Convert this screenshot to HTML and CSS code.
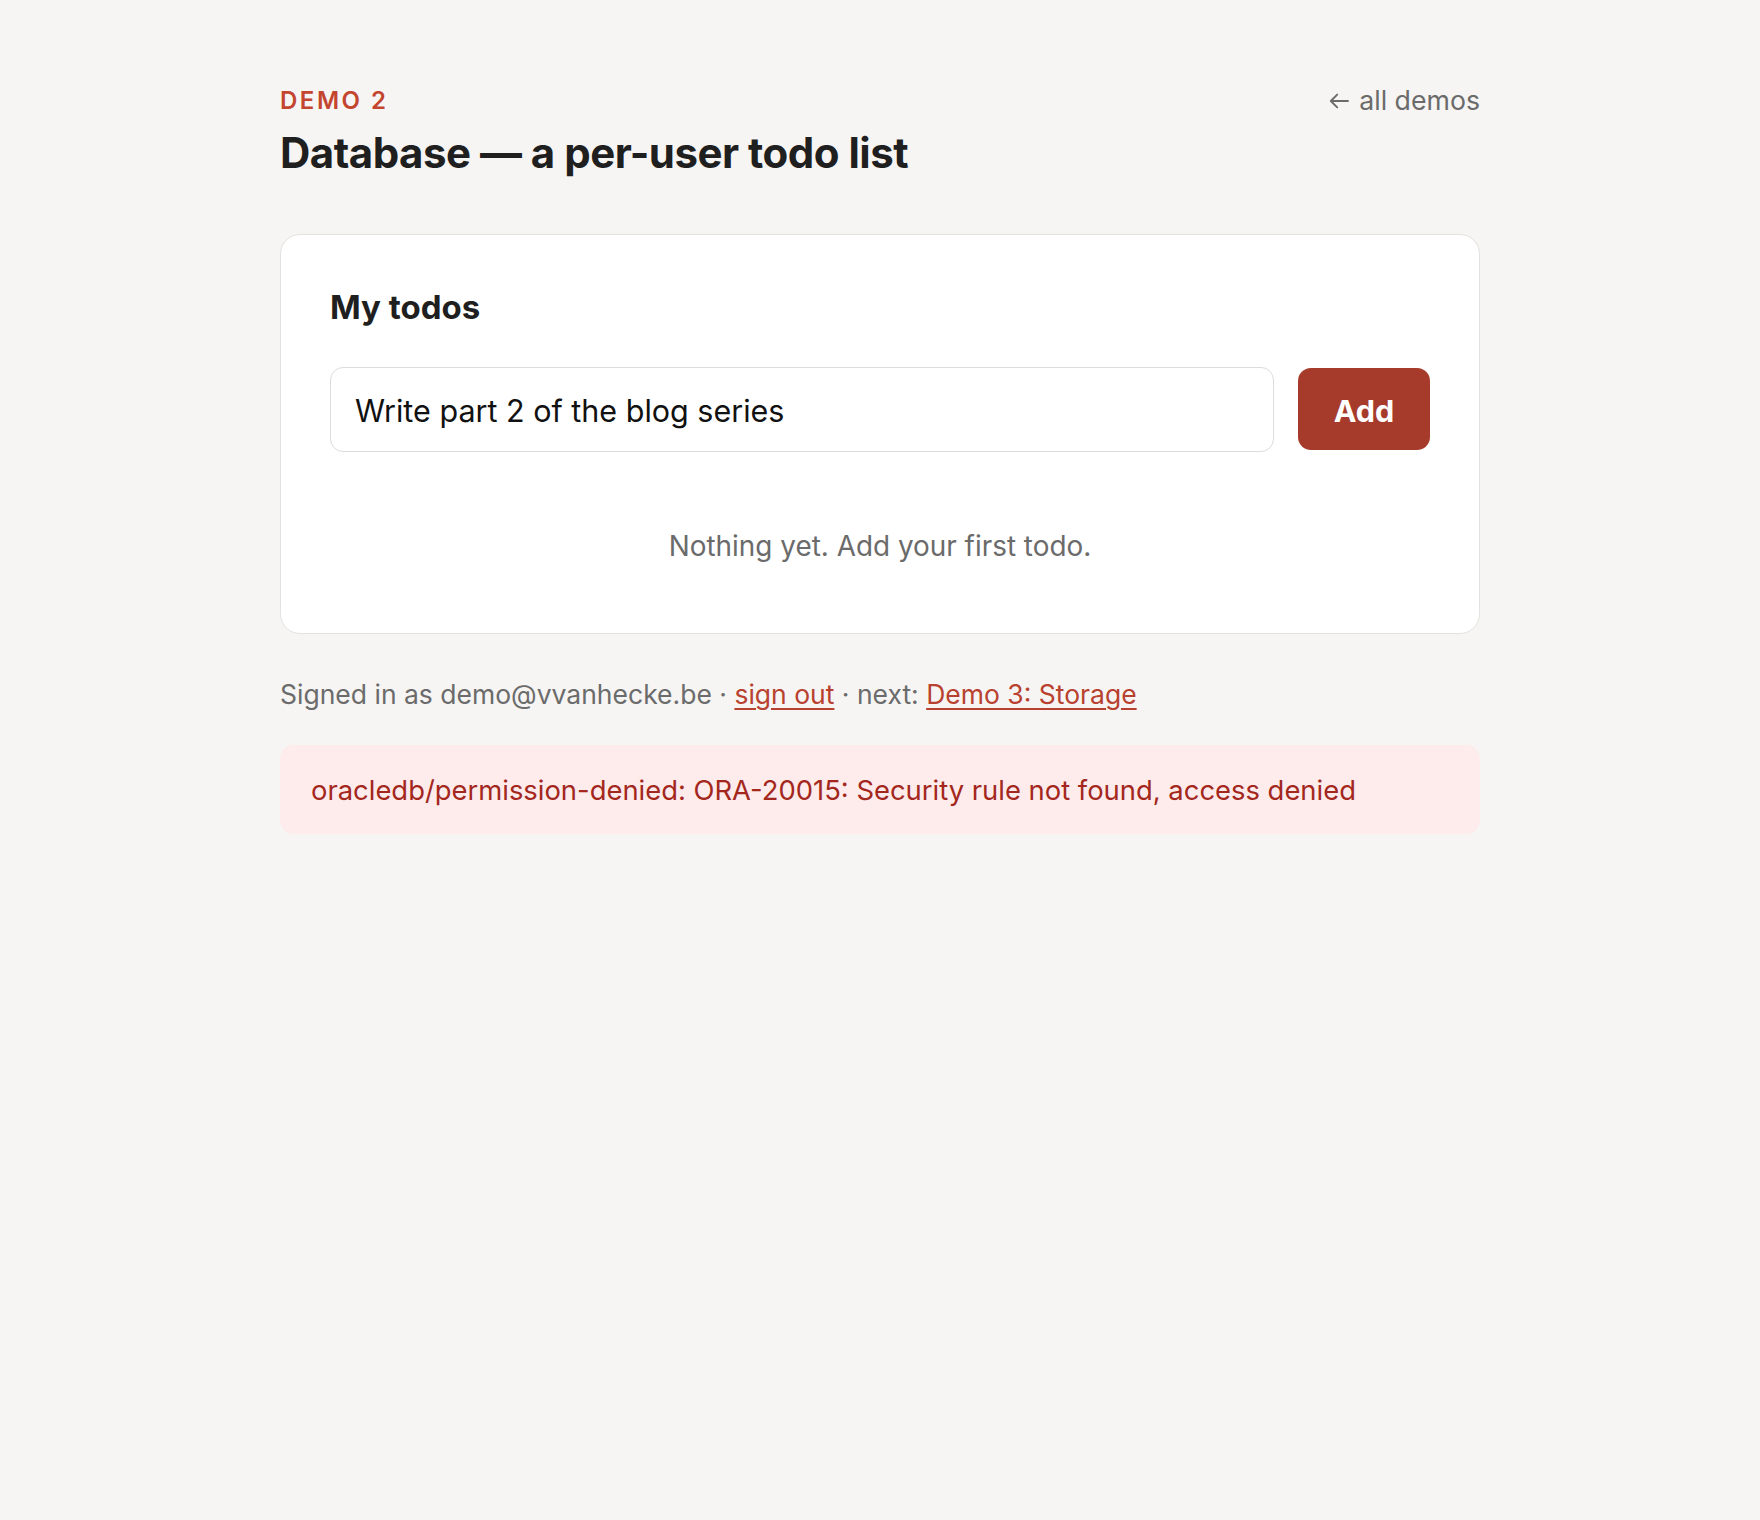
FILE: index.html
```html
<!DOCTYPE html>
<html lang="en">
<head>
<meta charset="utf-8">
<title>Demo 2 — Database</title>
<link rel="stylesheet" href="styles.css">
</head>
<body>
<div class="page">
  <header class="head">
    <div class="titles">
      <div class="eyebrow">DEMO 2</div>
      <h1 class="title">Database — a per-user todo list</h1>
    </div>
    <a class="back" href="#"><svg class="back-icon" viewBox="0 0 20 16" width="20" height="16" aria-hidden="true"><path d="M19 8H1.8M8.2 1.6L1.8 8L8.2 14.4" fill="none" stroke="currentColor" stroke-width="1.9" stroke-linecap="round" stroke-linejoin="round"/></svg>all demos</a>
  </header>

  <section class="card">
    <h2 class="card-title">My todos</h2>
    <form class="add-row">
      <input class="todo-input" type="text" value="Write part 2 of the blog series">
      <button class="add-btn" type="button">Add</button>
    </form>
    <p class="empty">Nothing yet. Add your first todo.</p>
  </section>

  <p class="meta">Signed in as demo@vvanhecke.be · <a href="#">sign out</a> · next: <a href="#">Demo 3: Storage</a></p>

  <div class="error">oracledb/permission-denied: ORA-20015: Security rule not found, access denied</div>
</div>
</body>
</html>
```

FILE: styles.css
```css
* { box-sizing: border-box; }

html, body {
  margin: 0;
  background: #f6f5f3;
}

body {
  font-family: Inter, "Noto Sans", "Liberation Sans", sans-serif;
  color: #1f1f1f;
}

.page {
  max-width: 1200px;
  margin: 0 auto;
  padding-top: 87px;
}

.head {
  display: flex;
  justify-content: space-between;
  align-items: flex-start;
}

.eyebrow {
  font-size: 24px;
  line-height: 28.8px;
  font-weight: 600;
  letter-spacing: 0.105em;
  color: #c4452f;
}

.title {
  margin: 12px 0 0;
  font-size: 42px;
  line-height: 50.4px;
  font-weight: 700;
  letter-spacing: -0.012em;
  color: #1f1f1f;
}

.back {
  display: flex;
  align-items: center;
  gap: 10px;
  margin-top: -1px;
  font-size: 26.7px;
  line-height: 28.8px;
  color: #6b6b6b;
  text-decoration: none;
}

.back-icon {
  width: 20px;
  height: 16px;
  margin-top: 2px;
}

.card {
  margin-top: 56px;
  background: #ffffff;
  border: 1.5px solid #e4e2df;
  border-radius: 20px;
  padding: 53px 49px 67px;
}

.card-title {
  margin: 0;
  font-size: 33px;
  line-height: 39.6px;
  font-weight: 700;
  color: #1f1f1f;
}

.add-row {
  margin: 39px 0 0;
  display: flex;
  gap: 24px;
  align-items: center;
}

.todo-input {
  flex: 1;
  height: 85px;
  padding: 3px 24px 0;
  font-family: inherit;
  font-size: 30.5px;
  color: #111;
  background: #fff;
  border: 1.5px solid #dedcd9;
  border-radius: 13px;
  outline: none;
}

.add-btn {
  height: 82px;
  width: 132px;
  padding-top: 3px;
  font-family: inherit;
  font-size: 30.5px;
  font-weight: 700;
  color: #ffffff;
  background: #a63b2c;
  border: none;
  border-radius: 13px;
}

.empty {
  margin: 76px 0 0;
  text-align: center;
  font-size: 27.9px;
  line-height: 37.8px;
  color: #6b6b6b;
}

.meta {
  margin: 41px 0 0;
  font-size: 26.5px;
  line-height: 38px;
  color: #6b6b6b;
}

.meta a {
  color: #b8412f;
  text-decoration: underline;
  text-underline-offset: 4px;
  text-decoration-thickness: 1.5px;
}

.error {
  margin-top: 32px;
  padding: 25px 31px 24px;
  font-size: 27.4px;
  line-height: 40px;
  color: #a3271d;
  background: #fdeceb;
  border-radius: 14px;
}
```
